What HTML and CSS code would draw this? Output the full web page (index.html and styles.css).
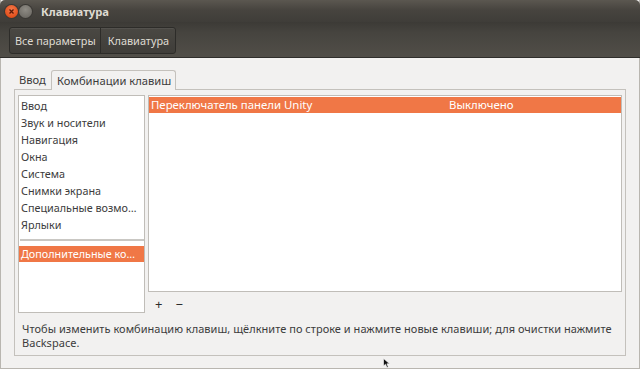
FILE: index.html
```html
<!DOCTYPE html>
<html lang="ru">
<head>
  <meta charset="UTF-8" />
  <title>Клавиатура</title>
  <link rel="stylesheet" href="styles.css">
</head>
<body>

<div class="window">
  <div class="titlebar">
    <div class="wbtn close">
      <svg width="13" height="13" viewBox="0 0 13 13"><path d="M4.5 4.5 L8.5 8.5 M8.5 4.5 L4.5 8.5" stroke="#5a1a08" stroke-width="1.3"/></svg>
    </div>
    <div class="wbtn minimize"></div>
    <span class="title">Клавиатура</span>
  </div>

  <div class="toolbar">
    <div class="crumbs">
      <span class="crumb">Все параметры</span>
      <span class="crumb">Клавиатура</span>
    </div>
  </div>

  <div class="content">
    <div class="tabs">
      <span class="tab">Ввод</span>
      <span class="tab active">Комбинации клавиш</span>
    </div>

    <div class="frame">
      <div class="panes">
        <div class="categories">
          <div class="cat">Ввод</div>
          <div class="cat">Звук и носители</div>
          <div class="cat">Навигация</div>
          <div class="cat">Окна</div>
          <div class="cat">Система</div>
          <div class="cat">Снимки экрана</div>
          <div class="cat">Специальные возмо…</div>
          <div class="cat">Ярлыки</div>
          <div class="sep"></div>
          <div class="cat selected">Дополнительные ко…</div>
        </div>

        <div class="right">
          <div class="shortcuts">
            <div class="row selected">
              <span class="name">Переключатель панели Unity</span>
              <span class="value">Выключено</span>
            </div>
          </div>
          <div class="actions">
            <span class="act">+</span>
            <span class="act">−</span>
          </div>
        </div>
      </div>

      <p class="hint">Чтобы изменить комбинацию клавиш, щёлкните по строке и нажмите новые клавиши; для очистки нажмите<br>Backspace.</p>
    </div>
  </div>

  <svg class="pointer" width="9" height="10" viewBox="0 0 9 10"><path d="M0.5 0.5 L0.5 8 L2.5 6.2 L4 9.5 L5.3 9 L3.9 5.8 L6.6 5.8 Z" fill="#111" stroke="#fff" stroke-width="0.6"/></svg>
</div>

</body>
</html>
```

FILE: styles.css
```css
body {
  margin: 0;
  font-family: "Noto Sans", "DejaVu Sans", sans-serif;
  font-size: 11px;
  color: #3c3c3c;
  background: #f2f1f0;
  overflow: hidden;
}
.window {
  position: relative;
  width: 640px;
  height: 369px;
  box-sizing: border-box;
  border: 1px solid #b9b6b0;
  border-top: none;
  background: #f2f1f0;
}
.titlebar {
  height: 22px;
  display: flex;
  align-items: center;
  padding-left: 5px;
  margin: 0 -1px;
  background: linear-gradient(#5b5750, #47443f 45%, #3f3d39);
  border-radius: 5px 5px 0 0;
}
.wbtn {
  width: 13px;
  height: 13px;
  border-radius: 50%;
  margin-right: 1px;
}
.close {
  background: radial-gradient(circle at 50% 35%, #f6794b, #e2501c 70%, #b8400f);
  box-shadow: 0 0 0 1px #3a3834;
}
.minimize {
  background: radial-gradient(circle at 50% 35%, #8f8c85, #716e68 70%, #5f5c56);
  box-shadow: 0 0 0 1px #3a3834;
}
.title {
  margin-left: 8px;
  font-weight: bold;
  color: #dfdbd2;
  font-size: 11.2px;
}
.toolbar {
  height: 36px;
  box-sizing: border-box;
  margin: 0 -1px;
  padding: 5px 9px;
  background: linear-gradient(#3c3a36, #46443f 30%, #514e48);
  border-bottom: 1px solid #2f2e2b;
}
.crumbs {
  display: inline-flex;
  height: 25px;
  border: 1px solid #2d2c29;
  border-radius: 3px;
  background: linear-gradient(#4a4843, #3f3d39);
  box-shadow: inset 0 1px 0 rgba(255,255,255,0.06);
}
.crumb {
  display: flex;
  align-items: center;
  padding: 0 4px 0 5px;
  color: #dfdbd2;
  font-size: 10.9px;
}
.crumb + .crumb {
  border-left: 1px solid #2d2c29;
  padding: 0 6px 0 7px;
}
.content {
  padding: 11px 13px 0 13px;
}
.tabs {
  display: flex;
  align-items: flex-end;
  height: 20px;
  padding-left: 4px;
}
.tab {
  height: 18px;
  line-height: 18px;
  padding: 0 5px 0 1px;
  color: #3c3c3c;
  font-size: 11.2px;
}
.tab.active {
  height: 19px;
  line-height: 19px;
  padding: 0 4px 0 5px;
  border: 1px solid #c4c1bc;
  border-bottom: none;
  border-radius: 3px 3px 0 0;
  background: #f2f1f0;
  margin-bottom: -1px;
  position: relative;
}
.frame {
  height: 267px;
  box-sizing: border-box;
  border: 1px solid #c4c1bc;
  padding: 5px 3px 0 3px;
}
.panes {
  display: flex;
  gap: 3px;
}
.categories {
  width: 127px;
  height: 218px;
  box-sizing: border-box;
  border: 1px solid #c0bdb8;
  background: #fff;
  padding-top: 1px;
  font-size: 10.8px;
}
.cat {
  height: 17px;
  line-height: 17px;
  padding-left: 2px;
  white-space: nowrap;
  overflow: hidden;
}
.sep {
  height: 2px;
  margin: 6px 0 5px 1px;
  background: #c9c7c3;
}
.cat.selected {
  height: 16px;
  line-height: 16px;
  background: #f07746;
  color: #fff;
}
.right {
  flex: 1;
}
.shortcuts {
  height: 197px;
  box-sizing: border-box;
  border: 1px solid #c0bdb8;
  background: #fff;
  padding-top: 1px;
  font-size: 11.4px;
}
.row {
  display: flex;
  height: 16px;
  line-height: 16px;
}
.row.selected {
  background: #f07746;
  color: #fff;
}
.row .name {
  width: 298px;
  padding-left: 2px;
}
.actions {
  display: flex;
  gap: 13px;
  padding: 3px 0 0 7px;
  font-size: 13px;
  color: #2b2b2b;
}
.hint {
  margin: 9px 0 0 4px;
  line-height: 14px;
  white-space: nowrap;
  letter-spacing: 0.03px;
}
.pointer {
  position: absolute;
  left: 382px;
  top: 358px;
}
```
